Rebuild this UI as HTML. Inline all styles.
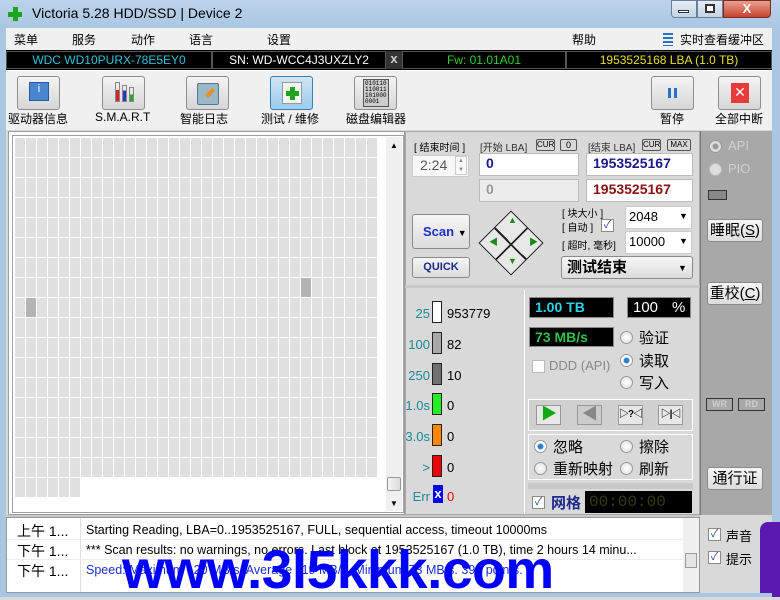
<!DOCTYPE html>
<html><head><meta charset="utf-8"><style>
*{margin:0;padding:0;box-sizing:border-box}
body{width:780px;height:597px;overflow:hidden;position:relative;background:#d9d9d9;font-family:"Liberation Sans","Noto Sans CJK SC",sans-serif;font-size:13px;color:#000}
.a{position:absolute;white-space:nowrap}
.btn{position:absolute;background:linear-gradient(#f6f6f6,#dcdcdc);border:1px solid #8a8a8a;border-radius:3px;white-space:nowrap}
.tb{position:absolute;width:43px;height:34px;background:linear-gradient(#f4f4f4,#d6d6d6);border:1px solid #8e8e8e;border-radius:3px}
.lbl{position:absolute;font-size:12px;text-align:center;white-space:nowrap}
.field{position:absolute;background:#fff;border:1px solid #bbb;font-weight:bold;font-size:14px;padding:1px 6px}
.blk{position:absolute;background:#000;border:1px solid #888;font-weight:bold;font-size:14px;padding:1px 5px;white-space:nowrap}
.rad{position:absolute;width:13px;height:13px;border-radius:50%;border:1px solid #999;background:radial-gradient(#fff,#ddd)}
.rad.on{background:radial-gradient(#2a7fd0 30%,#fff 45%)}
.chk{position:absolute;width:13px;height:13px;border:1px solid #8a8a8a;background:#fff;color:#2a4fa0;font-size:11px;line-height:11px;text-align:center}
.sq{position:absolute;left:432px;width:10px;height:22px;border:1px solid #222}
.num{position:absolute;color:#178a96;font-size:13px;text-align:right;width:30px;left:400px}
.val{position:absolute;left:447px;font-size:13px}
.tr{position:absolute;top:405px;width:25px;height:20px;border:1px solid #999;background:#e8e8e8;font-size:10px;font-weight:bold;line-height:18px;text-align:center;white-space:nowrap;overflow:hidden;letter-spacing:-1px}
</style></head><body>
<div class="a" style="left:0;top:0;width:780px;height:28px;background:linear-gradient(#bcd4ea,#a9c6e3)"></div>
<div class="a" style="left:8px;top:7px;width:14px;height:14px"><div class="a" style="left:5px;top:0;width:5px;height:14px;background:#1aa51a"></div><div class="a" style="left:0;top:5px;width:14px;height:5px;background:#1aa51a"></div></div>
<div class="a" style="left:32px;top:5px;font-size:14px">Victoria 5.28 HDD/SSD | Device 2</div>
<div class="a" style="left:671px;top:0;width:26px;height:18px;border:1px solid #6b7e98;border-radius:0 0 0 4px;background:linear-gradient(#e4ecf5,#c3d3e6)"></div>
<div class="a" style="left:678px;top:10px;width:11px;height:3px;background:#fff;border:1px solid #333"></div>
<div class="a" style="left:697px;top:0;width:26px;height:18px;border:1px solid #6b7e98;background:linear-gradient(#e4ecf5,#c3d3e6)"></div>
<div class="a" style="left:705px;top:4px;width:10px;height:9px;border:2px solid #333;background:#fff"></div>
<div class="a" style="left:723px;top:0;width:48px;height:18px;border:1px solid #7a2a20;border-radius:0 0 4px 0;background:linear-gradient(#e8a090,#c8442c);color:#fff;font-weight:bold;text-align:center;font-size:13px;line-height:16px">X</div>
<div class="a" style="left:0;top:28px;width:6px;height:569px;background:#a9c6e3"></div>
<div class="a" style="left:772px;top:28px;width:8px;height:569px;background:#a9c6e3"></div>
<div class="a" style="left:6px;top:28px;width:766px;height:22px;background:#f0f0f0"></div>
<div class="a" style="left:14px;top:31px;font-size:12px">菜单</div>
<div class="a" style="left:72px;top:31px;font-size:12px">服务</div>
<div class="a" style="left:131px;top:31px;font-size:12px">动作</div>
<div class="a" style="left:189px;top:31px;font-size:12px">语言</div>
<div class="a" style="left:267px;top:31px;font-size:12px">设置</div>
<div class="a" style="left:572px;top:31px;font-size:12px">帮助</div>
<div class="a" style="left:663px;top:33px;width:10px;height:13px;background:repeating-linear-gradient(#2a72c8 0 2px,transparent 2px 4px)"></div>
<div class="a" style="left:680px;top:31px;font-size:12px">实时查看缓冲区</div>
<div class="a" style="left:6px;top:50px;width:766px;height:20px;background:#000"></div>
<div class="a" style="left:6px;top:51px;width:206px;height:18px;border:1px solid #555;color:#2ec3d8;text-align:center;line-height:16px;font-size:12px">WDC WD10PURX-78E5EY0</div>
<div class="a" style="left:212px;top:51px;width:174px;height:18px;border:1px solid #555;color:#fff;text-align:center;line-height:16px;font-size:12px">SN: WD-WCC4J3UXZLY2</div>
<div class="a" style="left:386px;top:51px;width:16px;height:18px;background:#333;color:#ccc;text-align:center;line-height:16px;font-weight:bold">x</div>
<div class="a" style="left:402px;top:51px;width:164px;height:18px;border:1px solid #555;color:#2ed02e;text-align:center;line-height:16px;font-size:12px">Fw: 01.01A01</div>
<div class="a" style="left:566px;top:51px;width:206px;height:18px;border:1px solid #555;color:#e8e020;text-align:center;line-height:16px;font-size:12px">1953525168 LBA (1.0 TB)</div>
<div class="a" style="left:6px;top:70px;width:766px;height:60px;background:#f0f0f0;border-top:1px solid #fff"></div>
<div class="tb" style="left:17px;top:76px"><div class="a" style="left:11px;top:5px;width:20px;height:19px;background:#4a86d0;border:1px solid #2a5a9a;color:#fff;font-size:11px;text-align:center">i</div></div>
<div class="lbl" style="left:8px;top:110px">驱动器信息</div>
<div class="tb" style="left:102px;top:76px"><div class="a" style="left:12px;top:5px;width:5px;height:20px;border:1px solid #888;background:linear-gradient(transparent 40%,#d22 40%)"></div><div class="a" style="left:19px;top:8px;width:5px;height:17px;border:1px solid #888;background:linear-gradient(transparent 30%,#33c 30%)"></div><div class="a" style="left:26px;top:10px;width:5px;height:15px;border:1px solid #888;background:linear-gradient(transparent 50%,#2a2 50%)"></div></div>
<div class="lbl" style="left:95px;top:110px">S.M.A.R.T</div>
<div class="tb" style="left:186px;top:76px"><div class="a" style="left:10px;top:6px;width:22px;height:22px;background:#9ab8c8;border:1px solid #5a7888;border-radius:2px"></div><div class="a" style="left:18px;top:14px;width:10px;height:4px;background:#e89020;transform:rotate(-45deg)"></div></div>
<div class="lbl" style="left:180px;top:110px">智能日志</div>
<div class="tb" style="left:270px;top:76px;background:linear-gradient(#cfe6f8,#9ccbec);border-color:#3c7fb1"><div class="a" style="left:11px;top:5px;width:20px;height:22px;background:#f4f4f4;border:1px solid #999"></div><div class="a" style="left:19px;top:10px;width:5px;height:13px;background:#1aa51a"></div><div class="a" style="left:15px;top:14px;width:13px;height:5px;background:#1aa51a"></div></div>
<div class="lbl" style="left:261px;top:110px">测试 / 维修</div>
<div class="tb" style="left:354px;top:76px"><div class="a" style="left:8px;top:2px;width:26px;height:28px;background:#ccc;border:1px solid #555;font-size:6px;line-height:6px;font-family:'Liberation Mono',monospace;padding:1px;white-space:normal">010110 110011 101000 0001</div></div>
<div class="lbl" style="left:346px;top:110px">磁盘编辑器</div>
<div class="tb" style="left:651px;top:76px"><div class="a" style="left:16px;top:11px;width:3px;height:10px;background:#2a72c8"></div><div class="a" style="left:22px;top:11px;width:3px;height:10px;background:#2a72c8"></div></div>
<div class="lbl" style="left:660px;top:110px">暂停</div>
<div class="tb" style="left:718px;top:76px"><div class="a" style="left:12px;top:6px;width:18px;height:20px;background:#e83a3a;color:#fff;text-align:center;font-size:14px;line-height:19px">✕</div></div>
<div class="lbl" style="left:715px;top:110px">全部中断</div>
<div class="a" style="left:8px;top:131px;width:397px;height:384px;background:#fff;border:1px solid #a0a0a0"></div>
<div class="a" style="left:12px;top:135px;width:392px;height:378px;border:1px solid #a0a0a0"></div>
<div class="a" style="left:15px;top:138px;width:363px;height:340px;background-color:#e0e0e0;background-image:linear-gradient(to right,transparent 10px,#fff 10px),linear-gradient(to bottom,transparent 19px,#fff 19px);background-size:11px 20px"></div>
<div class="a" style="left:15px;top:478px;width:66px;height:19px;background-color:#e0e0e0;background-image:linear-gradient(to right,transparent 10px,#fff 10px);background-size:11px 20px"></div>
<div class="a" style="left:301px;top:278px;width:10px;height:19px;background:#b4b4b4"></div>
<div class="a" style="left:26px;top:298px;width:10px;height:19px;background:#b4b4b4"></div>
<div class="a" style="left:386px;top:137px;width:16px;height:374px;background:#f0f0f0"></div>
<div class="a" style="left:390px;top:141px;font-size:8px">▲</div>
<div class="a" style="left:390px;top:499px;font-size:8px">▼</div>
<div class="a" style="left:387px;top:477px;width:14px;height:14px;border:1px solid #999;border-radius:2px;background:linear-gradient(to right,#f4f4f4,#ddd)"></div>
<div class="a" style="left:405px;top:131px;width:295px;height:384px;background:#d9d9d9;border:1px solid #a8a8a8"></div>
<div class="a" style="left:414px;top:139px;font-size:10px">[ 结束时间 ]</div>
<div class="a" style="left:412px;top:155px;width:57px;height:22px;background:#f8f8f8;border:1px solid #ccc;color:#555;font-size:14px;padding:1px 7px">2:24</div>
<div class="a" style="left:455px;top:156px;width:12px;height:19px;border:1px solid #ccc;font-size:6px;color:#888;text-align:center;line-height:9px;white-space:normal">▲<br>▼</div>
<div class="a" style="left:480px;top:139px;font-size:10px;color:#333">[开始 LBA]</div>
<div class="a" style="left:536px;top:139px;width:19px;height:12px;border:1px solid #555;font-size:8px;text-align:center;line-height:10px;border-radius:2px">CUR</div>
<div class="a" style="left:560px;top:139px;width:17px;height:12px;border:1px solid #555;font-size:9px;text-align:center;line-height:10px;border-radius:2px">0</div>
<div class="a" style="left:588px;top:139px;font-size:10px;color:#333">[结束 LBA]</div>
<div class="a" style="left:642px;top:139px;width:19px;height:12px;border:1px solid #555;font-size:8px;text-align:center;line-height:10px;border-radius:2px">CUR</div>
<div class="a" style="left:667px;top:139px;width:24px;height:12px;border:1px solid #555;font-size:8px;text-align:center;line-height:10px;border-radius:2px">MAX</div>
<div class="field" style="left:479px;top:153px;width:100px;height:23px;color:#1a1a8a">0</div>
<div class="field" style="left:586px;top:153px;width:107px;height:23px;color:#1a1a8a">1953525167</div>
<div class="field" style="left:479px;top:179px;width:100px;height:23px;color:#999;background:#ececec">0</div>
<div class="field" style="left:586px;top:179px;width:107px;height:23px;color:#8a1010">1953525167</div>
<div class="btn" style="left:412px;top:214px;width:58px;height:35px;color:#1a30d0;font-weight:bold;font-size:13px;padding:9px 0 0 10px">Scan <span style="color:#000;font-size:9px">▼</span></div>
<div class="btn" style="left:412px;top:257px;width:58px;height:21px;color:#1a2a8a;font-weight:bold;font-size:11px;text-align:center;line-height:19px">QUICK</div>
<div class="a" style="left:488px;top:220px;width:46px;height:46px;transform:rotate(45deg);border:1px solid #222;background:#e8e8e8;background-image:linear-gradient(to right,transparent 22px,#222 22px,#222 24px,transparent 24px),linear-gradient(to bottom,transparent 22px,#222 22px,#222 24px,transparent 24px)"></div>
<div class="a" style="left:508px;top:215px;font-size:9px;color:#1a8a1a">▲</div>
<div class="a" style="left:508px;top:256px;font-size:9px;color:#1a8a1a">▼</div>
<div class="a" style="left:489px;top:235px;font-size:9px;color:#1a8a1a">◀</div>
<div class="a" style="left:529px;top:235px;font-size:9px;color:#1a8a1a">▶</div>
<div class="a" style="left:562px;top:205px;font-size:10px">[ 块大小 ]</div>
<div class="a" style="left:562px;top:219px;font-size:10px">[ 自动 ]</div>
<div class="chk" style="left:601px;top:219px">✓</div>
<div class="a" style="left:562px;top:237px;font-size:10px">[ 超时, 毫秒]</div>
<div class="a" style="left:625px;top:206px;width:67px;height:23px;background:#fff;border:1px solid #ccc;font-size:13px;padding:2px 3px">2048<span class="a" style="left:53px;top:4px;font-size:9px">▼</span></div>
<div class="a" style="left:625px;top:231px;width:67px;height:23px;background:#fff;border:1px solid #ccc;font-size:13px;padding:2px 3px">10000<span class="a" style="left:53px;top:4px;font-size:9px">▼</span></div>
<div class="btn" style="left:561px;top:256px;width:132px;height:23px;font-size:15px;font-weight:bold;padding:0 5px;line-height:21px">测试结束<span class="a" style="left:116px;top:1px;font-size:9px">▼</span></div>
<div class="a" style="left:405px;top:285px;width:295px;height:3px;background:#c8c8c8"></div>
<div class="a" style="left:405px;top:290px;width:120px;height:224px;border-right:1px solid #fff"></div>
<div class="num" style="top:306px">25</div><div class="sq" style="top:301px;background:#fff"></div><div class="val" style="top:306px">953779</div>
<div class="num" style="top:337px">100</div><div class="sq" style="top:332px;background:#a8a8a8"></div><div class="val" style="top:337px">82</div>
<div class="num" style="top:368px">250</div><div class="sq" style="top:363px;background:#707070"></div><div class="val" style="top:368px">10</div>
<div class="num" style="top:398px">1.0s</div><div class="sq" style="top:393px;background:#22ee22"></div><div class="val" style="top:398px">0</div>
<div class="num" style="top:429px">3.0s</div><div class="sq" style="top:424px;background:#ff8800"></div><div class="val" style="top:429px">0</div>
<div class="num" style="top:460px">&gt;</div><div class="sq" style="top:455px;background:#ee0000"></div><div class="val" style="top:460px">0</div>
<div class="num" style="top:489px">Err</div><div class="a" style="left:433px;top:485px;width:10px;height:18px;background:#0000ee;color:#fff;font-weight:bold;font-size:13px;text-align:center;line-height:18px">x</div><div class="val" style="top:489px;color:#e00">0</div>
<div class="blk" style="left:529px;top:297px;width:85px;height:21px;color:#2ed0e8">1.00 TB</div>
<div class="blk" style="left:627px;top:297px;width:64px;height:21px;color:#fff;font-weight:normal;font-size:15px;padding:0 5px;line-height:19px">100<span class="a" style="left:44px;top:0">%</span></div>
<div class="blk" style="left:529px;top:327px;width:85px;height:20px;color:#2ec04a">73 MB/s</div>
<div class="chk" style="left:532px;top:360px;border-color:#bbb"></div>
<div class="a" style="left:549px;top:358px;color:#888;font-size:13px">DDD (API)</div>
<div class="rad" style="left:620px;top:331px"></div><div class="a" style="left:639px;top:327px;font-size:15px">验证</div>
<div class="rad on" style="left:620px;top:354px"></div><div class="a" style="left:639px;top:350px;font-size:15px">读取</div>
<div class="rad" style="left:620px;top:376px"></div><div class="a" style="left:639px;top:372px;font-size:15px">写入</div>
<div class="a" style="left:528px;top:399px;width:165px;height:32px;border:1px solid #fff;background:#d0d0d0"></div>
<div class="tr" style="left:536px;color:#1a1;font-size:16px">▶</div>
<div class="tr" style="left:577px;background:#ccc;color:#888;font-size:16px">◀</div>
<div class="tr" style="left:618px">▷?◁</div>
<div class="tr" style="left:658px">▷|◁</div>
<div class="a" style="left:528px;top:434px;width:165px;height:46px;border:1px solid #fff"></div>
<div class="rad on" style="left:534px;top:440px"></div><div class="a" style="left:553px;top:436px;font-size:15px">忽略</div>
<div class="rad" style="left:620px;top:440px"></div><div class="a" style="left:639px;top:436px;font-size:15px">擦除</div>
<div class="rad" style="left:534px;top:462px"></div><div class="a" style="left:553px;top:458px;font-size:15px">重新映射</div>
<div class="rad" style="left:620px;top:462px"></div><div class="a" style="left:639px;top:458px;font-size:15px">刷新</div>
<div class="a" style="left:528px;top:483px;width:165px;height:6px;background:#c8c8c8"></div>
<div class="chk" style="left:532px;top:496px">✓</div>
<div class="a" style="left:551px;top:492px;font-size:15px;font-weight:bold;color:#1a2a8a">网格</div>
<div class="a" style="left:585px;top:491px;width:107px;height:22px;background:#000;color:#3a3a10;font-family:'Liberation Mono',monospace;font-size:16px;padding:0 4px;line-height:22px">00:00:00</div>
<div class="a" style="left:700px;top:131px;width:72px;height:384px;background:#a8a8a8;border-left:1px solid #777"></div>
<div class="rad" style="left:709px;top:140px;background:radial-gradient(#999 30%,#ddd 45%)"></div><div class="a" style="left:728px;top:138px;color:#d0d0d0">API</div>
<div class="rad" style="left:709px;top:163px;border-color:#bbb;background:#ddd"></div><div class="a" style="left:728px;top:161px;color:#d0d0d0">PIO</div>
<div class="a" style="left:708px;top:190px;width:19px;height:10px;background:#888;border:1px solid #333"></div>
<div class="btn" style="left:707px;top:219px;width:56px;height:23px;font-size:15px;text-align:center;line-height:21px">睡眠(<u>S</u>)</div>
<div class="btn" style="left:707px;top:282px;width:56px;height:23px;font-size:15px;text-align:center;line-height:21px">重校(<u>C</u>)</div>
<div class="a" style="left:706px;top:398px;width:27px;height:13px;border:1px solid #333;color:#ccc;font-size:9px;font-weight:bold;text-align:center;line-height:11px">WR</div>
<div class="a" style="left:738px;top:398px;width:27px;height:13px;border:1px solid #333;color:#ccc;font-size:9px;font-weight:bold;text-align:center;line-height:11px">RD</div>
<div class="btn" style="left:707px;top:467px;width:56px;height:23px;font-size:15px;text-align:center;line-height:21px">通行证</div>
<div class="a" style="left:6px;top:515px;width:694px;height:2px;background:#c8c8c8"></div>
<div class="a" style="left:6px;top:517px;width:694px;height:76px;background:#fff;border:1px solid #999"></div>
<div class="a" style="left:80px;top:518px;width:1px;height:74px;background:#e0e0e0"></div>
<div class="a" style="left:7px;top:539px;width:676px;height:1px;background:#ececec"></div>
<div class="a" style="left:7px;top:559px;width:676px;height:1px;background:#ececec"></div>
<div class="a" style="left:17px;top:521px;font-size:14px">上午 1...</div>
<div class="a" style="left:86px;top:523px;font-size:12.5px">Starting Reading, LBA=0..1953525167, FULL, sequential access, timeout 10000ms</div>
<div class="a" style="left:17px;top:541px;font-size:14px">下午 1...</div>
<div class="a" style="left:86px;top:543px;font-size:12.5px">*** Scan results: no warnings, no errors. Last block at 1953525167 (1.0 TB), time 2 hours 14 minu...</div>
<div class="a" style="left:17px;top:561px;font-size:14px">下午 1...</div>
<div class="a" style="left:86px;top:563px;font-size:12.5px;color:#1a30d0">Speed: Maximum 120 MB/s. Average 119 MB/s. Minimum 73 MB/s. 392 points.</div>
<div class="a" style="left:683px;top:518px;width:16px;height:74px;background:#f0f0f0"></div>
<div class="a" style="left:685px;top:553px;width:12px;height:15px;border:1px solid #999;background:#e4e4e4"></div>
<div class="a" style="left:700px;top:515px;width:72px;height:82px;background:#d9d9d9"></div>
<div class="chk" style="left:708px;top:528px">✓</div><div class="a" style="left:726px;top:526px;font-size:13px">声音</div>
<div class="chk" style="left:708px;top:551px">✓</div><div class="a" style="left:726px;top:549px;font-size:13px">提示</div>
<div class="a" style="left:760px;top:522px;width:20px;height:75px;background:#5a1ab0;border-radius:8px 0 0 0"></div>
<div class="a" style="left:6px;top:593px;width:766px;height:4px;background:#a9c6e3"></div>
<div class="a" style="left:122px;top:540px;font-size:54px;font-weight:bold;color:#0000ff;line-height:60px;letter-spacing:-0.5px;transform:scaleX(1.02);transform-origin:left">www.3l5kkk.com</div>
</body></html>
